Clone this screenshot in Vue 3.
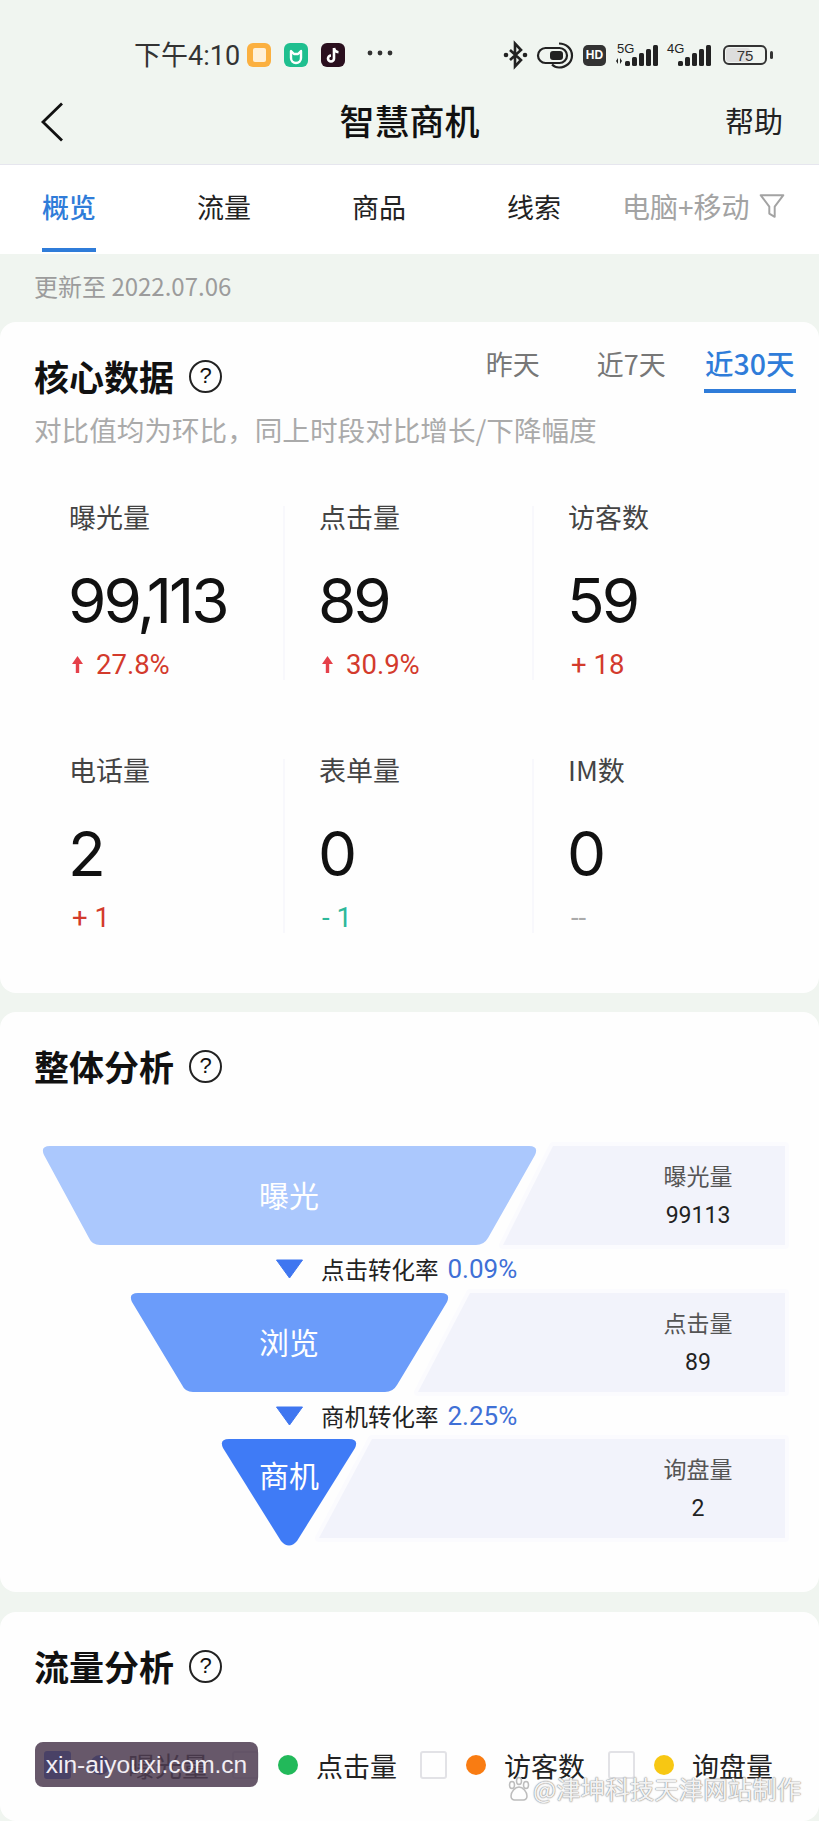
<template>
  <div class="page">
    <header class="top">
      <div class="status">
        <span class="time">下午4:10</span>
        <span class="app app-orange"><i></i></span>
        <span class="app app-green">
          <svg viewBox="0 0 24 24" width="24" height="24"><path d="M7 8v7a5 5 0 0 0 10 0V8l-3 3h-4z" fill="none" stroke="#fff" stroke-width="2.4" stroke-linejoin="round" /></svg>
        </span>
        <span class="app app-dark">
          <svg viewBox="0 0 24 24" width="24" height="24"><path d="M13 5v10.5a3 3 0 1 1-3-3M13 5c.4 2.6 2 4 4.5 4.2" fill="none" stroke="#fff" stroke-width="2.6" /></svg>
        </span>
        <svg viewBox="0 0 26 6" width="26" height="6">
          <circle cx="3" cy="3" r="2.400" fill="#333" /><circle cx="13" cy="3" r="2.400" fill="#333" /><circle cx="23" cy="3" r="2.400" fill="#333" />
        </svg>

        <div class="status-right">
          <svg class="bt" viewBox="0 0 25 26" width="25" height="26">
            <path d="M7 8l11 10-6 6.500V1.500l6 6.500L7 18" fill="none" stroke="#222" stroke-width="2.600" />
            <circle cx="3" cy="13" r="2.300" fill="#222" /><circle cx="22" cy="13" r="2.300" fill="#222" />
          </svg>
          <svg viewBox="0 0 37 27" width="37" height="27">
            <rect x="1" y="6" width="29" height="15" rx="7.500" fill="none" stroke="#222" stroke-width="2.200" />
            <rect x="13" y="9" width="13" height="9" rx="3" fill="#222" />
            <path d="M22 1.500c7 0 13 5 13 12s-6 12-13 12c-3 0-5-1-7-3" fill="none" stroke="#222" stroke-width="2.200" />
          </svg>
          <span class="hd">HD</span>
          <svg viewBox="0 0 47 24" width="47" height="24">
            <text x="2" y="10" font-size="13" fill="#222" font-family="Liberation Sans, sans-serif">5G</text>
            <path d="M1 18l2-3v6zM7 18l-2 3v-6z" fill="#222" />
            <g fill="#222">
              <rect x="10" y="18" width="5" height="5" rx="1.500" />
              <rect x="17" y="14" width="5" height="9" rx="1.500" />
              <rect x="24" y="10" width="5" height="13" rx="1.500" />
              <rect x="31" y="6" width="5" height="17" rx="1.500" />
              <rect x="38" y="2" width="5" height="21" rx="1.500" />
            </g>
          </svg>
          <svg class="sig4" viewBox="0 0 45 24" width="45" height="24">
            <text x="0" y="10" font-size="13" fill="#222" font-family="Liberation Sans, sans-serif">4G</text>
            <g fill="#222">
              <rect x="11" y="18" width="5" height="5" rx="1.500" />
              <rect x="18" y="14" width="5" height="9" rx="1.500" />
              <rect x="25" y="10" width="5" height="13" rx="1.500" />
              <rect x="32" y="6" width="5" height="17" rx="1.500" />
              <rect x="39" y="2" width="5" height="21" rx="1.500" />
            </g>
          </svg>
          <span class="battery"><span class="battery-fill"></span><span class="battery-num">75</span></span>
          <span class="battery-nub"></span>
        </div>
      </div>

      <nav class="nav">
        <svg viewBox="0 0 24 40" width="24" height="40"><path d="M22 1.500L3 20l19 18.500" fill="none" stroke="#111" stroke-width="2.800" /></svg>
        <h1 class="nav-title">智慧商机</h1>
        <span class="nav-help">帮助</span>
      </nav>
    </header>

    <div class="tabs">
      <span v-for="(t, i) in tabs" :key="t" class="tab" :class="{ active: i === 0 }">{{ t }}</span>
      <div class="filter">
        <span>电脑+移动</span>
        <svg viewBox="0 0 24 24" width="26" height="26"><path d="M1.500 2h21l-8 10.500V22l-5-3v-6.500z" fill="none" stroke="#a3a3a3" stroke-width="1.800" stroke-linejoin="round" /></svg>
      </div>
    </div>

    <div class="updated">更新至 2022.07.06</div>

    <section class="card core">
      <div class="core-head">
        <div class="section-title">核心数据 <span class="help">?</span></div>
        <div class="ranges">
          <div v-for="(r, i) in ranges" :key="r" class="range">
            <span :class="{ on: i === 2 }">{{ r }}</span>
          </div>
        </div>
      </div>
      <p class="desc">对比值均为环比，同上时段对比增长/下降幅度</p>

      <div class="metrics">
        <div v-for="m in metrics" :key="m.label" class="metric">
          <div class="metric-label">{{ m.label }}</div>
          <div class="metric-value">{{ m.value }}</div>
          <div class="metric-delta" :class="m.tone">
            <svg v-if="m.arrow" viewBox="0 0 11 17" width="11" height="17"><path d="M5.500 0L11 8H7.200v9H3.800V8H0z" fill="#e5404a" /></svg>
            {{ m.delta }}
          </div>
        </div>
      </div>
    </section>

    <section class="card overall">
      <div class="section-title">整体分析 <span class="help">?</span></div>

      <div class="funnel">
        <template v-for="(f, i) in funnel" :key="f.name">
          <div class="funnel-row" :style="{ height: f.h + 'px' }">
            <svg class="funnel-bg" :viewBox="`0 0 819 ${f.h}`" width="819" :height="f.h">
              <path :d="f.panel" fill="#f2f3fb" stroke="#fbfbfe" stroke-width="8" stroke-linejoin="round" paint-order="stroke" />
              <path :d="f.shape" :fill="f.color" />
            </svg>
            <div class="funnel-name" :class="{ last: i === 2 }">{{ f.name }}</div>
            <div class="funnel-info">
              <span class="info-label">{{ f.label }}</span>
              <span class="info-value">{{ f.value }}</span>
            </div>
          </div>
          <div v-if="f.rate" class="funnel-rate" :style="{ height: f.gap + 'px' }">
            <svg viewBox="0 0 29 20" width="29" height="20"><path d="M1.500 1h26L14.500 19z" fill="#3f76f0" stroke="#3f76f0" stroke-linejoin="round" /></svg>
            <span class="rate-name">{{ f.rateName }}</span>
            <span class="rate-num">{{ f.rate }}</span>
          </div>
        </template>
      </div>
    </section>

    <section class="card flow">
      <div class="section-title">流量分析 <span class="help">?</span></div>
      <div class="legend">
        <div v-for="(l, i) in legend" :key="l.name" class="legend-item">
          <span class="check" :class="{ checked: i === 0 }"></span>
          <span class="dot" :style="{ background: l.color }"></span>
          <span class="legend-name">{{ l.name }}</span>
        </div>
      </div>
    </section>

    <div class="site-badge">xin-aiyouxi.com.cn</div>
    <div class="watermark">
      <svg viewBox="0 0 24 26" width="24" height="26">
        <g fill="none" stroke="#bdbdbd" stroke-width="1.500">
          <ellipse cx="5" cy="9" rx="2.500" ry="3.500" /><ellipse cx="12" cy="5" rx="2.500" ry="3.500" /><ellipse cx="19" cy="9" rx="2.500" ry="3.500" />
          <path d="M12 11c-4 0-8 5-8 9 0 5 5 4 8 4s8 1 8-4c0-4-4-9-8-9z" />
        </g>
      </svg>
      <span>@津坤科技天津网站制作</span>
    </div>
  </div>
</template>

<script setup>
const tabs = ['概览', '流量', '商品', '线索']
const ranges = ['昨天', '近7天', '近30天']

const metrics = [
  { label: '曝光量', value: '99,113', delta: '27.8%', tone: 'red', arrow: true },
  { label: '点击量', value: '89', delta: '30.9%', tone: 'red', arrow: true },
  { label: '访客数', value: '59', delta: '+ 18', tone: 'red' },
  { label: '电话量', value: '2', delta: '+ 1', tone: 'red' },
  { label: '表单量', value: '0', delta: '- 1', tone: 'green' },
  { label: 'IM数', value: '0', delta: '--', tone: 'grey' }
]

const funnel = [
  {
    name: '曝光', label: '曝光量', value: '99113', color: '#abc8fd', h: 99, gap: 48,
    shape: 'M50 0H529Q539 0 535 9L488 92Q484 99 476 99H100Q92 99 89 92L44 9Q40 0 50 0Z',
    panel: 'M553 0H785V99H503Z',
    rateName: '点击转化率', rate: '0.09%'
  },
  {
    name: '浏览', label: '点击量', value: '89', color: '#6b9cfa', h: 99, gap: 47,
    shape: 'M138 0H441Q451 0 447 9L397 92Q393 99 385 99H193Q185 99 182 92L132 9Q128 0 138 0Z',
    panel: 'M470 0H785V99H418Z',
    rateName: '商机转化率', rate: '2.25%'
  },
  {
    name: '商机', label: '询盘量', value: '2', color: '#3f7bf6', h: 107,
    shape: 'M229 0H349Q359 0 355 9L297 102Q289 111 281 102L223 9Q219 0 229 0Z',
    panel: 'M372 0H785V99H319Z'
  }
]

const legend = [
  { name: '曝光量', color: '#2f5fd0' },
  { name: '点击量', color: '#22b95a' },
  { name: '访客数', color: '#f97c12' },
  { name: '询盘量', color: '#f7c713' }
]
</script>

<style>
html, body {
  margin: 0;
  background: #f0f5f0;
}
</style>

<style scoped>
.page {
  position: relative;
  display: flex;
  flex-direction: column;
  width: 819px;
  height: 1821px;
  overflow: hidden;
  background: #f0f5f0;
  color: #222;
  font-family: "Noto Sans CJK SC", "Liberation Sans", sans-serif;
}

.top {
  height: 165px;
  box-sizing: border-box;
  border-bottom: 1px solid #e6e6ee;
}

.status {
  display: flex;
  align-items: center;
  height: 66px;
  margin-top: 20px;
  padding: 0 46px 0 134px;
}

.time {
  width: 105px;
  margin-right: 8px;
  font-family: "Roboto", "Noto Sans CJK SC", sans-serif;
  font-size: 27px;
  white-space: nowrap;
  color: #333;
}

.app {
  display: flex;
  align-items: center;
  justify-content: center;
  width: 24px;
  height: 24px;
  margin-top: 4px;
  margin-right: 13px;
  border-radius: 6px;
}

.app-orange {
  background: #fbb040;
}

.app-orange i {
  width: 13px;
  height: 14px;
  background: #fff0d8;
  border-radius: 2px;
}

.app-green {
  background: #1fbf8f;
}

.app-dark {
  background: #2a0f1e;
  margin-right: 22px;
}

.status-right {
  display: flex;
  align-items: center;
  gap: 9px;
  margin-top: 4px;
  margin-left: auto;
}

.status-right svg {
  overflow: visible;
}

.hd {
  display: flex;
  align-items: center;
  justify-content: center;
  width: 23px;
  height: 21px;
  border-radius: 5px;
  background: #333;
  color: #fff;
  font-family: "Liberation Sans", sans-serif;
  font-size: 12px;
  font-weight: 700;
}

.sig4 {
  margin-left: -4px;
  margin-right: 2px;
}

.battery {
  position: relative;
  display: flex;
  align-items: center;
  justify-content: center;
  width: 44px;
  height: 20px;
  box-sizing: border-box;
  border: 2px solid #333;
  border-radius: 6px;
}

.battery-fill {
  position: absolute;
  left: 1px;
  top: 1px;
  bottom: 1px;
  width: 60%;
  background: #ddd;
  border-radius: 3px;
}

.battery-num {
  position: relative;
  font-family: "Liberation Sans", sans-serif;
  font-size: 15px;
  color: #333;
}

.battery-nub {
  width: 3px;
  height: 8px;
  margin-left: -6px;
  background: #333;
  border-radius: 2px;
}

.nav {
  display: grid;
  grid-template-columns: 1fr auto 1fr;
  align-items: center;
  height: 68px;
  padding: 0 36px;
}

.nav svg {
  margin-left: 4px;
  margin-top: 4px;
}

.nav-title {
  margin: 0;
  font-size: 35px;
  font-weight: 500;
  line-height: 68px;
  color: #111;
}

.nav-help {
  justify-self: end;
  font-size: 29px;
  color: #222;
}

.tabs {
  display: flex;
  gap: 101px;
  height: 89px;
  padding: 0 34px 0 42px;
  box-sizing: border-box;
  background: #fff;
}

.tab {
  display: flex;
  flex: none;
  align-items: center;
  box-sizing: border-box;
  height: 87px;
  padding-bottom: 1px;
  border-bottom: 4px solid transparent;
  font-size: 27px;
  white-space: nowrap;
  color: #222;
}

.tab.active {
  border-bottom-color: #2f7cd9;
  color: #2f7cd9;
  font-weight: 500;
}

.filter {
  display: flex;
  flex: none;
  align-items: center;
  gap: 9px;
  height: 87px;
  padding-bottom: 6px;
  box-sizing: border-box;
  margin-left: -40px;
  font-size: 28px;
  white-space: nowrap;
  color: #a3a3a3;
}

.updated {
  height: 68px;
  padding-left: 34px;
  line-height: 64px;
  font-size: 24px;
  color: #9c9c9c;
}

.card {
  background: #fefefe;
  border-radius: 16px;
}

.core {
  height: 671px;
}

.overall {
  height: 580px;
  margin-top: 19px;
}

.flow {
  flex: 1;
  margin-top: 20px;
}

.core-head {
  display: flex;
  justify-content: space-between;
  align-items: flex-start;
  padding-right: 10px;
}

.section-title {
  display: flex;
  align-items: center;
  gap: 15px;
  height: 36px;
  margin-top: 35px;
  padding-left: 34px;
  font-size: 35px;
  font-weight: 700;
  color: #111;
}

.help {
  display: flex;
  align-items: center;
  justify-content: center;
  box-sizing: border-box;
  width: 33px;
  height: 33px;
  margin-top: 2px;
  border: 2px solid #222;
  border-radius: 50%;
  font-family: "Liberation Sans", sans-serif;
  font-size: 22px;
  font-weight: 400;
}

.ranges {
  display: grid;
  grid-template-columns: repeat(3, 118.500px);
  padding-top: 22px;
  font-size: 27px;
  color: #777;
  text-align: center;
}

.range span {
  display: inline-block;
  height: 46px;
  padding-bottom: 3px;
  line-height: 38px;
  box-sizing: border-box;
}

.range span.on {
  height: 49px;
  padding: 0 1px 7px;
  border-bottom: 4px solid #2f7cd9;
  font-size: 28.500px;
  color: #2f7cd9;
  font-weight: 500;
}

.desc {
  margin: 18px 0 0;
  padding-left: 34px;
  line-height: 36px;
  font-size: 27.600px;
  color: #aaa;
}

.metrics {
  display: grid;
  grid-template-columns: 250px 249px 1fr;
  row-gap: 79px;
  margin: 59px 0 0 35px;
}

.metric {
  height: 174px;
  box-sizing: border-box;
  padding-left: 34px;
  border-right: 2px solid #f8f8fc;
}

.metric:nth-child(3n) {
  border-right: 0;
}

.metric-label {
  height: 22px;
  line-height: 22px;
  font-size: 27px;
  color: #444;
}

.metric-value {
  margin-top: 38px;
  margin-left: -1px;
  height: 70px;
  line-height: 70px;
  font-family: "Inter", "Liberation Sans", sans-serif;
  font-size: 62px;
  font-weight: 400;
  letter-spacing: -3px;
  color: #111;
}

.metric-delta {
  display: flex;
  align-items: center;
  gap: 13px;
  height: 32px;
  margin-top: 12px;
  padding-left: 3px;
  font-family: "Roboto", sans-serif;
  font-size: 27.500px;
  font-weight: 400;
}

.red {
  color: #d33a2c;
}

.green {
  color: #2db89a;
}

.grey {
  color: #aaa;
}

.funnel {
  margin-top: 63px;
}

.funnel-row {
  position: relative;
  display: flex;
}

.funnel-bg {
  position: absolute;
  left: 0;
  top: 0;
  overflow: visible;
}

.funnel-name {
  position: relative;
  display: flex;
  align-items: center;
  justify-content: center;
  width: 578px;
  height: 96px;
  font-size: 30px;
  color: #fff;
}

.funnel-name.last {
  height: 70px;
}

.funnel-info {
  position: relative;
  display: flex;
  flex-direction: column;
  align-items: center;
  gap: 11px;
  box-sizing: border-box;
  width: 174px;
  height: 99px;
  margin-left: 33px;
  padding-top: 14px;
}

.info-label {
  line-height: 30px;
  font-size: 23px;
  color: #555;
}

.info-value {
  line-height: 30px;
  font-family: "Roboto", sans-serif;
  font-size: 23px;
  color: #222;
}

.funnel-rate {
  display: flex;
  align-items: center;
  padding-left: 275px;
}

.rate-name {
  margin-left: 17px;
  font-size: 23.500px;
  color: #222;
}

.rate-num {
  margin-left: 9px;
  font-family: "Roboto", sans-serif;
  font-size: 26px;
  color: #3f70d6;
}

.legend {
  display: flex;
  gap: 23px;
  margin-top: 68px;
  padding-left: 44px;
}

.legend-item {
  display: flex;
  align-items: center;
  height: 28px;
}

.check {
  box-sizing: border-box;
  width: 27px;
  height: 28px;
  border: 2px solid #e2e2e6;
  border-radius: 3px;
}

.check.checked {
  background: #2f5fe0;
  border-color: #2f5fe0;
}

.dot {
  width: 20px;
  height: 20px;
  margin-left: 19px;
  border-radius: 50%;
}

.legend-name {
  margin-left: 18px;
  font-size: 27px;
  color: #222;
}

.site-badge {
  position: absolute;
  left: 35px;
  top: 1742px;
  width: 223px;
  height: 45px;
  border-radius: 8px;
  background: rgba(78, 61, 81, 0.86);
  color: #f2eef4;
  font-family: "Liberation Sans", sans-serif;
  font-size: 24.500px;
  line-height: 45px;
  text-align: center;
}

.watermark {
  position: absolute;
  left: 507px;
  top: 1771px;
  display: flex;
  align-items: center;
  gap: 2px;
  font-size: 24.500px;
  white-space: nowrap;
  color: rgba(255, 255, 255, 0.9);
  text-shadow: 0 0 1px #999, 0 0 1px #999, 0 0 2px #aaa;
}
</style>
